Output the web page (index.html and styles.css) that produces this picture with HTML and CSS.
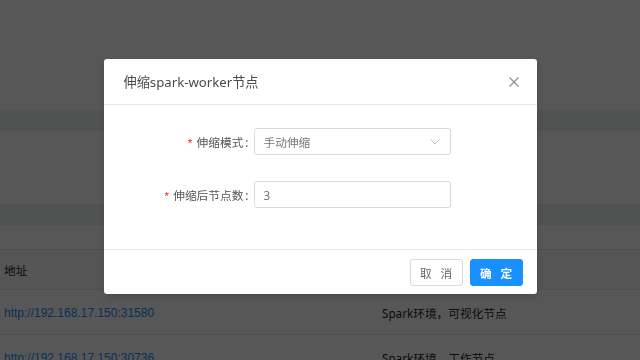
FILE: index.html
```html
<!DOCTYPE html>
<html lang="zh-CN">
<head>
  <meta charset="UTF-8" />
  <title>Spark 集群</title>
  <link rel="stylesheet" href="styles.css">
</head>
<body>

  <div class="page">
    <div class="blank top"></div>
    <div class="band"></div>
    <div class="blank mid"></div>
    <div class="band"></div>
    <div class="blank low"></div>

    <table class="table">
      <thead>
        <tr><th class="col-addr">地址</th><th>说明</th></tr>
      </thead>
      <tbody>
        <tr>
          <td class="col-addr"><a href="#">http://192.168.17.150:31580</a></td>
          <td>Spark环境，可视化节点</td>
        </tr>
        <tr>
          <td class="col-addr"><a href="#">http://192.168.17.150:30736</a></td>
          <td>Spark环境，工作节点</td>
        </tr>
      </tbody>
    </table>
  </div>

  <!-- modal -->
  <div class="mask">
    <div class="modal">
      <div class="modal-header">
        <span class="modal-title">伸缩spark-worker节点</span>
        <button class="modal-close" aria-label="Close">
          <svg width="10" height="10" viewBox="0 0 10 10">
            <path d="M0.5 0.5 L9.5 9.5 M9.5 0.5 L0.5 9.5" stroke="#8c8c8c" stroke-width="1.1" fill="none"/>
          </svg>
        </button>
      </div>

      <div class="modal-body">
        <div class="form-item">
          <label class="form-label"><span class="req">*</span>伸缩模式</label>
          <div class="form-control">
            <div class="select">
              <span>手动伸缩</span>
              <svg width="10" height="6" viewBox="0 0 10 6">
                <path d="M0.5 0.5 L5 5 L9.5 0.5" stroke="#bfbfbf" stroke-width="1" fill="none"/>
              </svg>
            </div>
          </div>
        </div>
        <div class="form-item last">
          <label class="form-label"><span class="req">*</span>伸缩后节点数</label>
          <div class="form-control">
            <input class="input" type="text" value="3">
          </div>
        </div>
      </div>

      <div class="modal-footer">
        <button class="btn">取 消</button>
        <button class="btn btn-primary">确 定</button>
      </div>
    </div>
  </div>

</body>
</html>
```

FILE: styles.css
```css
* {
  box-sizing: border-box;
}

body {
  margin: 0;
  font-family: "Segoe UI", "Noto Sans", "Noto Sans CJK SC", sans-serif;
  font-size: 11.7px;
  color: #262626;
  background: #fff;
  overflow: hidden;
}

/* page behind the mask */
.page {
  width: 640px;
}

.blank.top { height: 110px; }
.blank.mid { height: 73px; }
.blank.low { height: 24px; }

.band {
  height: 21px;
  background: #eeeff1;
}

.table {
  width: 100%;
  border-collapse: collapse;
}

.table th,
.table td {
  text-align: left;
  font-weight: 400;
  padding: 0 4px;
  border-bottom: 1px solid #e8e8e8;
  color: #262626;
}

.table th {
  height: 40px;
  background: #fafafa;
  border-top: 1px solid #e8e8e8;
}

.table td {
  height: 45px;
}

.table .col-addr {
  width: 378px;
}

.table a {
  color: #1890ff;
  text-decoration: none;
  font-family: "Liberation Sans", "Noto Sans CJK SC", sans-serif;
  font-size: 12px;
}

/* modal */
.mask {
  position: fixed;
  inset: 0;
  background: rgba(0, 0, 0, 0.66);
  display: flex;
  justify-content: center;
  align-items: flex-start;
  padding-top: 59px;
}

.modal {
  width: 433px;
  background: #fff;
  border-radius: 3px;
  box-shadow: 0 3px 8px rgba(0, 0, 0, 0.15);
}

.modal-header {
  display: flex;
  align-items: center;
  justify-content: space-between;
  height: 46px;
  padding-left: 20px;
  border-bottom: 1px solid #e8e8e8;
}

.modal-title {
  font-size: 13.2px;
  color: #4a4a4a;
}

.modal-close {
  width: 46px;
  height: 45px;
  border: none;
  background: none;
  padding: 0;
  display: flex;
  align-items: center;
  justify-content: center;
  cursor: pointer;
}

.modal-body {
  padding: 20px 20px 20px;
}

.form-item {
  display: flex;
  align-items: center;
  height: 33px;
  margin-bottom: 20px;
}

.form-item.last {
  margin-bottom: 18px;
}

.form-label {
  width: 130px;
  text-align: right;
  color: #555;
  white-space: nowrap;
}

.form-label::after {
  content: ":";
  margin: 0 5px 0 2px;
}

.req {
  color: #f5222d;
  margin-right: 3px;
  font-family: "Liberation Mono", monospace;
}

.form-control {
  width: 197px;
}

.select,
.input {
  width: 100%;
  height: 27px;
  border: 1px solid #d9d9d9;
  border-radius: 3px;
  background: #fff;
  font: inherit;
  color: #757575;
}

.select {
  display: flex;
  align-items: center;
  justify-content: space-between;
  padding: 0 10px 0 9px;
}

.input {
  padding: 0 9px;
  outline: none;
}

.modal-footer {
  display: flex;
  justify-content: flex-end;
  gap: 7px;
  padding: 9px 14px 8px;
  border-top: 1px solid #e8e8e8;
}

.btn {
  height: 27px;
  width: 53px;
  font: inherit;
  letter-spacing: 0.25em;
  padding: 0 0 0 3px;
  border: 1px solid #d9d9d9;
  border-radius: 3px;
  background: #fff;
  color: #666;
  cursor: pointer;
}

.btn-primary {
  background: #1890ff;
  border-color: #1890ff;
  color: #fff;
  font-weight: 600;
}
```
